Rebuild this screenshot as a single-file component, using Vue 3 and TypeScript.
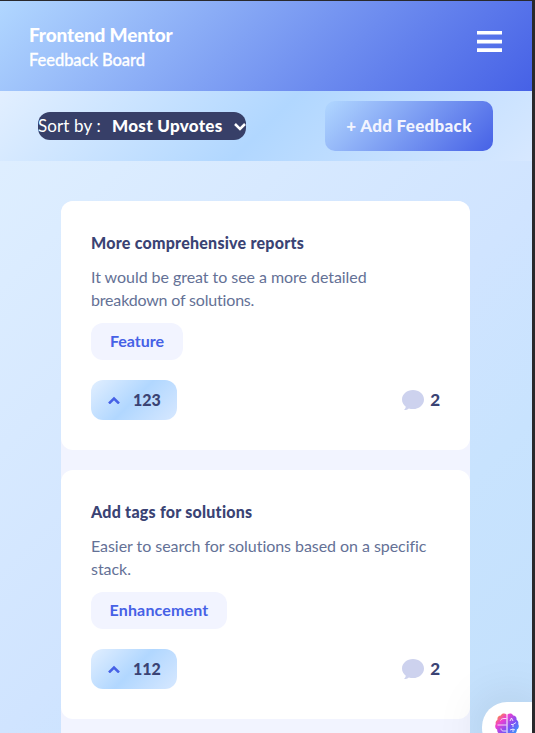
<script setup lang="ts">
interface Feedback {
  id: number
  title: string
  lines: string[]
  category: string
  kind: string
  votes: number
  comments: number
}

const items: Feedback[] = [
  {
    id: 1,
    title: 'More comprehensive reports',
    lines: ['It would be great to see a more detailed', 'breakdown of solutions.'],
    category: 'Feature',
    kind: 'feature',
    votes: 123,
    comments: 2,
  },
  {
    id: 2,
    title: 'Add tags for solutions',
    lines: ['Easier to search for solutions based on a specific', 'stack.'],
    category: 'Enhancement',
    kind: 'enhancement',
    votes: 112,
    comments: 2,
  },
]
</script>

<template>
  <div class="frame">
    <div class="page">
      <header class="header">
        <div class="brand">
          <h1>Frontend Mentor</h1>
          <p>Feedback Board</p>
        </div>
        <button class="menu" aria-label="Menu">
          <svg width="25" height="22" viewBox="0 0 25 22" fill="#fff">
            <path d="M0 0h25v3.600H0zM0 8.700h25v3.700H0zM0 17.300h25v3.700H0z" />
          </svg>
        </button>
      </header>

      <div class="toolbar">
        <button class="sort">
          <span class="sort-label">Sort by :</span>
          <strong>Most Upvotes</strong>
          <svg width="12" height="9" viewBox="0 0 12 9" fill="none" stroke="#fff" stroke-width="2.5">
            <path d="M1 2l5 5 5-5" />
          </svg>
        </button>
        <button class="add">+ Add Feedback</button>
      </div>

      <main class="list">
        <article v-for="item in items" :key="item.id" class="card">
          <h2>{{ item.title }}</h2>
          <p class="description" :class="item.kind">
            <span v-for="line in item.lines" :key="line">{{ line }}</span>
          </p>
          <span class="tag" :class="item.kind">{{ item.category }}</span>
          <div class="actions">
            <button class="vote">
              <svg width="12" height="8" viewBox="0 0 12 8" fill="none" stroke="#4661e6" stroke-width="2.5">
                <path d="M1 7.500l5-5 5 5" />
              </svg>
              <span>{{ item.votes }}</span>
            </button>
            <span class="comments">
              <svg width="22" height="20" viewBox="0 0 22 20" fill="#cdd2ee">
                <path d="M11 0C17 0 22 4.100 22 9.400S17.300 19 11 19c-1.500 0-3-.2-4.200-.6C5.600 19.300 4 20 2 20c1-1 1.700-2.200 1.800-3.300C1.500 15 0 12.600 0 9.600 0 4.100 5 0 11 0z" />
              </svg>
              <b>{{ item.comments }}</b>
            </span>
          </div>
        </article>
      </main>

      <div class="assistant">
        <svg width="24" height="24" viewBox="0 0 24 24">
          <defs>
            <linearGradient id="brain" x1="0" y1="0" x2="1" y2="1">
              <stop offset="0" stop-color="#ffb000" />
              <stop offset=".3" stop-color="#ee3fd0" />
              <stop offset=".6" stop-color="#7b52f5" />
              <stop offset="1" stop-color="#19b5ff" />
            </linearGradient>
          </defs>
          <path
            fill="url(#brain)"
            d="M11.500 1.500C10 0 6.500.2 5.800 2.600 3.500 2.700 2 4.600 2.500 6.800.8 8 .3 9.500.8 11c-1.200 2-.6 4.500 1.400 5.500C2 19 3.500 21 6 21c1 2.500 4.300 2.800 5.500 1zM12.500 1.500C14 0 17.500.2 18.200 2.600c2.300.1 3.800 2 3.300 4.200 1.700 1.200 2.200 2.700 1.700 4.200 1.200 2 .6 4.500-1.400 5.500.2 2.500-1.300 4.500-3.800 4.500-1 2.500-4.300 2.800-5.500 1z"
          />
          <path
            fill="none"
            stroke="#fff"
            stroke-width=".8"
            d="M11.500 5.500H9C7 5.500 6 6.500 5.500 7.500M2.500 12h9M11.500 18H8.500c-1.500 0-2.500-1-2.500-2.500M15 8l1.500-3L18 8M16 11.500h2l3-2M18 11.500v2.500M15 17l3-1 2 1M18 16v3"
          />
        </svg>
      </div>
    </div>
  </div>
</template>

<style>
body {
  margin: 0;
  overflow: hidden;
}
</style>

<style scoped>
.frame {
  box-sizing: border-box;
  height: 733px;
  padding: 1px 3px 0 0;
  background: #29292c;
  font-family: Lato, 'Open Sans', sans-serif;
  font-variant-ligatures: none;
}
.page {
  position: relative;
  height: 732px;
  overflow: hidden;
  background: linear-gradient(135deg, #e2f1ff 0%, #d0e4ff 58%, #c8e3fe 75%, #c3e0fc 100%);
}
h1,
h2,
p {
  margin: 0;
}
button {
  border: 0;
  padding: 0;
  font-family: inherit;
}
.header {
  box-sizing: border-box;
  display: flex;
  justify-content: space-between;
  height: 90px;
  padding: 21px 30px 0 29px;
  color: #fff;
  background: linear-gradient(135deg, #b1d7ff, #4661e6);
}
.brand h1 {
  font-size: 19px;
  line-height: 26px;
  font-weight: 900;
  letter-spacing: -0.15px;
  white-space: nowrap;
}
.brand p {
  font-size: 16.500px;
  line-height: 24px;
  font-weight: 500;
  letter-spacing: -0.05px;
  -webkit-text-stroke: 0.3px #fff;
}
.menu {
  align-self: flex-start;
  margin-top: 9px;
  background: none;
}
.menu svg {
  display: block;
}
.toolbar {
  box-sizing: border-box;
  display: flex;
  align-items: center;
  justify-content: space-between;
  height: 70px;
  padding: 0 39px 0 38px;
  background: linear-gradient(135deg, #e2efff, #b1d7ff 50%, #d7e8ff);
}
.sort {
  display: flex;
  align-items: center;
  width: 208px;
  height: 28px;
  border-radius: 12px;
  color: #fff;
  background: #373f68;
  font-size: 17px;
  white-space: nowrap;
}
.sort-label {
  width: 74px;
  padding-bottom: 2px;
  text-align: left;
  letter-spacing: 0.12px;
}
.sort strong {
  width: 122px;
  padding-bottom: 2px;
  text-align: left;
  font-weight: 900;
  letter-spacing: 0.3px;
}
.add {
  width: 168px;
  height: 50px;
  padding-bottom: 2px;
  border-radius: 10px;
  color: #f2f4fe;
  background: linear-gradient(135deg, #b1d7ff, #4661e6);
  font-size: 17px;
  font-weight: 900;
  letter-spacing: 0.3px;
  white-space: nowrap;
}
.list {
  display: flex;
  flex-direction: column;
  gap: 20px;
  width: 409px;
  height: 600px;
  margin: 40px 0 0 61px;
  border-radius: 12px;
  background: #f2f4ff;
}
.card {
  box-sizing: border-box;
  flex: none;
  height: 249px;
  padding: 30px 30px 0;
  border-radius: 12px;
  background: #fff;
}
.card h2 {
  color: #3a4374;
  font-size: 16px;
  line-height: 24px;
  font-weight: 900;
  letter-spacing: 0.24px;
  white-space: nowrap;
}
.description {
  margin-top: 10px;
  color: #647196;
  font-size: 16px;
  line-height: 23px;
}
.description span {
  display: block;
  letter-spacing: -0.05px;
  white-space: nowrap;
}
.description.feature span:last-child {
  letter-spacing: -0.18px;
}
.tag {
  box-sizing: border-box;
  display: flex;
  align-items: center;
  justify-content: center;
  width: 92px;
  height: 37px;
  margin-top: 12px;
  padding-bottom: 2px;
  border-radius: 12px;
  color: #4661e6;
  background: #f2f4ff;
  font-size: 16px;
  font-weight: 700;
}
.tag.enhancement {
  width: 136px;
  letter-spacing: 0.15px;
}
.actions {
  display: flex;
  align-items: center;
  justify-content: space-between;
  margin-top: 20px;
}
.vote {
  display: flex;
  align-items: center;
  gap: 13px;
  width: 86px;
  height: 40px;
  padding-left: 17px;
  border-radius: 12px;
  color: #3a4374;
  background: linear-gradient(135deg, #e2efff, #b1d7ff 50%, #d7e8ff);
  font-size: 16px;
  font-weight: 900;
}
.vote span {
  padding-bottom: 2px;
}
.comments {
  display: flex;
  align-items: center;
  gap: 6px;
  color: #3a4374;
  font-size: 17px;
}
.comments b {
  padding-bottom: 2px;
  font-weight: 900;
}
.assistant {
  position: absolute;
  right: 0;
  bottom: -20px;
  display: flex;
  align-items: flex-start;
  width: 37px;
  height: 40px;
  padding: 11px 0 0 13px;
  box-sizing: content-box;
  border-radius: 25px 0 0 25px;
  background: #fff;
  box-shadow: 0 0 50px rgba(0, 0, 0, 0.13);
}
</style>
